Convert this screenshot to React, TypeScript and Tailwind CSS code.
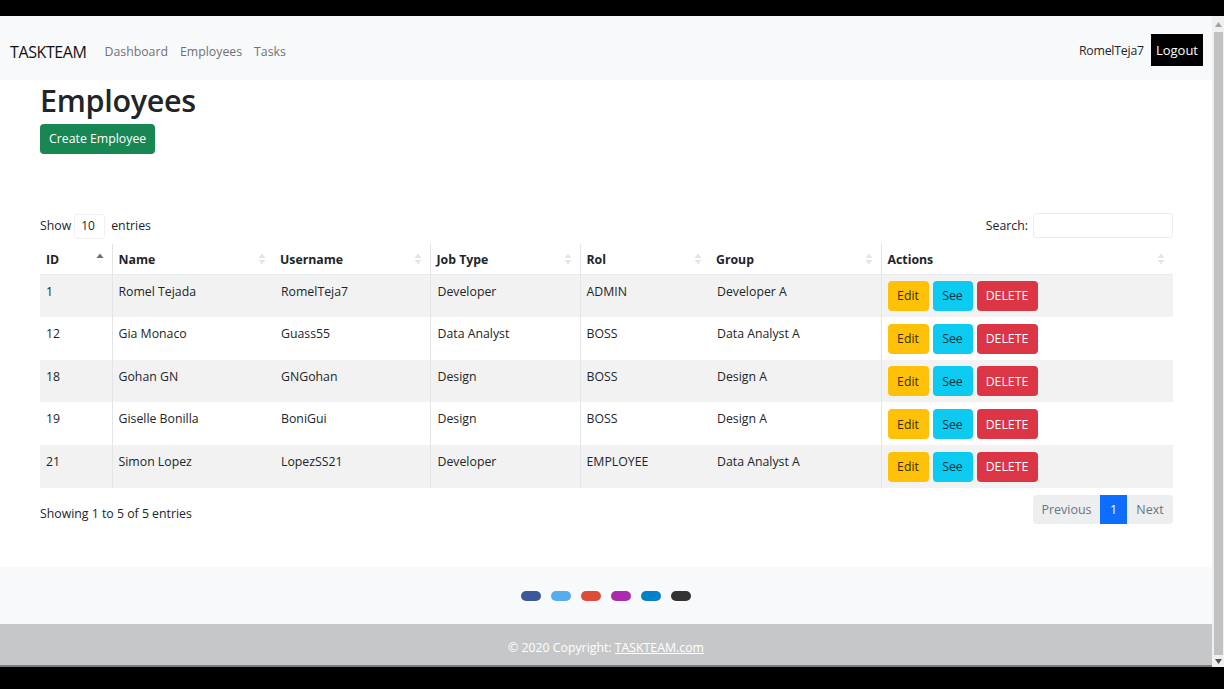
import React from "react";

const rows = [
  { id: "1", name: "Romel Tejada", user: "RomelTeja7", job: "Developer", rol: "ADMIN", group: "Developer A" },
  { id: "12", name: "Gia Monaco", user: "Guass55", job: "Data Analyst", rol: "BOSS", group: "Data Analyst A" },
  { id: "18", name: "Gohan GN", user: "GNGohan", job: "Design", rol: "BOSS", group: "Design A" },
  { id: "19", name: "Giselle Bonilla", user: "BoniGui", job: "Design", rol: "BOSS", group: "Design A" },
  { id: "21", name: "Simon Lopez", user: "LopezSS21", job: "Developer", rol: "EMPLOYEE", group: "Data Analyst A" },
];

function SortIcon({ active }: { active?: boolean }) {
  return (
    <svg width="8" height="14" viewBox="0 0 8 14" className="absolute right-[8px] top-[8px]">
      <path d="M0.5 6 L4 1.5 L7.5 6 Z" fill={active ? "#6b6f73" : "#e4e5e6"} />
      <path d="M0.5 8 L4 12.5 L7.5 8 Z" fill={active ? "#f4f4f4" : "#e4e5e6"} />
    </svg>
  );
}

const cols = [
  { label: "ID", w: "w-[72px]", line: false },
  { label: "Name", w: "w-[162px]", line: true },
  { label: "Username", w: "w-[156px]", line: false },
  { label: "Job Type", w: "w-[150px]", line: true },
  { label: "Rol", w: "w-[130px]", line: true },
  { label: "Group", w: "w-[171px]", line: false },
  { label: "Actions", w: "w-[292px]", line: true },
];

export default function App() {
  const font = { fontFamily: '"Open Sans", "Noto Sans", Arial, sans-serif' };
  return (
    <div className="w-[1224px] h-[689px] bg-black flex flex-col overflow-hidden" style={font}>
      <div className="h-[16px] shrink-0" />
      <div className="flex h-[651px] shrink-0">
        <div className="w-[1212px] flex flex-col bg-white">
          {/* navbar */}
          <nav className="h-[64px] shrink-0 bg-[#f8f9fa] flex items-center pl-[10px] pr-[9px] pt-[4px]">
            <span className="text-[16px] text-[#111] tracking-[-0.4px] pt-[3px]">TASKTEAM</span>
            <div className="flex gap-[12px] ml-[18px] text-[12.3px] text-[#6f7275] pt-[4px]">
              <span>Dashboard</span>
              <span>Employees</span>
              <span>Tasks</span>
            </div>
            <div className="ml-auto flex items-center">
              <span className="text-[12.3px] text-[#212529] mr-[7px] pt-[3px] tracking-[-0.2px]">RomelTeja7</span>
              <span className="bg-black text-white text-[13px] h-[32px] px-[5px] flex items-center pt-[1px]">Logout</span>
            </div>
          </nav>
          {/* main */}
          <main className="px-[40px] pr-[39px] h-[487px] shrink-0 text-[#212529]">
            <h1 className="text-[30.5px] font-semibold leading-[38px] mt-[1px] tracking-[-0.3px]">Employees</h1>
            <div className="mt-[5px] inline-flex items-center h-[30px] px-[9px] rounded-[4px] bg-[#198754] text-white text-[12.3px]">
              Create Employee
            </div>
            <div className="mt-[59px] flex items-center justify-between h-[25px] text-[12.3px]">
              <div className="flex items-center pt-[1px]">
                <span>Show</span>
                <span className="ml-[3px] w-[31px] h-[25px] border border-[#f0f0f0] rounded-[3px] flex items-center pl-[6px] text-[12px]">10</span>
                <span className="ml-[6px]">entries</span>
              </div>
              <div className="flex items-center">
                <span className="pt-[1px]">Search:</span>
                <span className="ml-[5px] w-[140px] h-[25px] border border-[#ececec] rounded-[3px]" />
              </div>
            </div>
            <table className="mt-[6px] w-[1133px] border-collapse text-[12.3px] table-fixed">
              <thead>
                <tr className="h-[30px] border-b border-[#e9ecef]">
                  {cols.map((c, i) => (
                    <th
                      key={c.label}
                      className={`${c.w} relative text-left font-bold pl-[6px] pt-[3px] ${c.line ? "border-l border-[#e3e5e7]" : ""}`}
                    >
                      {c.label}
                      <SortIcon active={i === 0} />
                    </th>
                  ))}
                </tr>
              </thead>
              <tbody>
                {rows.map((r, i) => (
                  <tr key={r.id} className={`h-[42.8px] ${i % 2 === 0 ? "bg-[#f2f2f2]" : "bg-white"}`}>
                    <td className="pl-[6px] align-top pt-[8px]">{r.id}</td>
                    <td className="pl-[6px] align-top pt-[8px] border-l border-[#e3e5e7]">{r.name}</td>
                    <td className="pl-[7px] align-top pt-[8px]">{r.user}</td>
                    <td className="pl-[7px] align-top pt-[8px] border-l border-[#e3e5e7]">{r.job}</td>
                    <td className="pl-[6px] align-top pt-[8px] border-l border-[#e3e5e7]">{r.rol}</td>
                    <td className="pl-[7px] align-top pt-[8px]">{r.group}</td>
                    <td className="pl-[6px] align-middle border-l border-[#e3e5e7]">
                      <div className="flex gap-[4px] pt-[1px]">
                        <span className="h-[30px] w-[41px] flex items-center justify-center rounded-[4px] bg-[#ffc107] text-[#3a2c00] pt-[1px]">Edit</span>
                        <span className="h-[30px] w-[40px] flex items-center justify-center rounded-[4px] bg-[#0dcaf0] text-[#05323c] pt-[1px]">See</span>
                        <span className="h-[30px] w-[61px] flex items-center justify-center rounded-[4px] bg-[#dc3545] text-white pt-[1px]">DELETE</span>
                      </div>
                    </td>
                  </tr>
                ))}
              </tbody>
            </table>
            <div className="mt-[7px] flex items-center justify-between text-[12.3px]">
              <span className="pt-[9px]">Showing 1 to 5 of 5 entries</span>
              <div className="flex h-[29px] text-[12.5px]">
                <span className="w-[67px] flex items-center justify-center bg-[#eceef0] text-[#6c757d] rounded-l-[4px] pt-[1px]">Previous</span>
                <span className="w-[27px] flex items-center justify-center bg-[#0d6efd] text-white pt-[1px]">1</span>
                <span className="w-[46px] flex items-center justify-center bg-[#eceef0] text-[#6c757d] rounded-r-[4px] pt-[1px]">Next</span>
              </div>
            </div>
          </main>
          {/* footer */}
          <footer className="flex flex-col shrink-0">
            <div className="h-[57px] bg-[#f8f9fa] flex items-center justify-center gap-[10px] pt-[1px]">
              <span className="w-[20px] h-[10px] rounded-full bg-[#3b5998]" />
              <span className="w-[20px] h-[10px] rounded-full bg-[#55acee]" />
              <span className="w-[20px] h-[10px] rounded-full bg-[#dd4b39]" />
              <span className="w-[20px] h-[10px] rounded-full bg-[#ac2bac]" />
              <span className="w-[20px] h-[10px] rounded-full bg-[#0082ca]" />
              <span className="w-[20px] h-[10px] rounded-full bg-[#333333]" />
            </div>
            <div className="h-[41px] bg-[#c6c7c8] flex items-center justify-center text-white text-[12.3px] pt-[7px]">
              <span>© 2020 Copyright: <span className="underline">TASKTEAM.com</span></span>
            </div>
            <div className="h-[2px] bg-[#7a7a7a]" />
          </footer>
        </div>
        {/* scrollbar */}
        <div className="w-[12px] bg-[#f0f0f0] flex flex-col items-center">
          <svg width="7" height="5" viewBox="0 0 7 5" className="mt-[6px]"><path d="M0 5 L3.5 0 L7 5Z" fill="#a3a3a3" /></svg>
          <div className="w-[9px] bg-[#c1c1c1] mt-[5px] h-[623px]" />
          <svg width="7" height="5" viewBox="0 0 7 5" className="mt-[4px]"><path d="M0 0 L3.5 5 L7 0Z" fill="#505050" /></svg>
        </div>
      </div>
      <div className="flex-1 bg-black" />
    </div>
  );
}
